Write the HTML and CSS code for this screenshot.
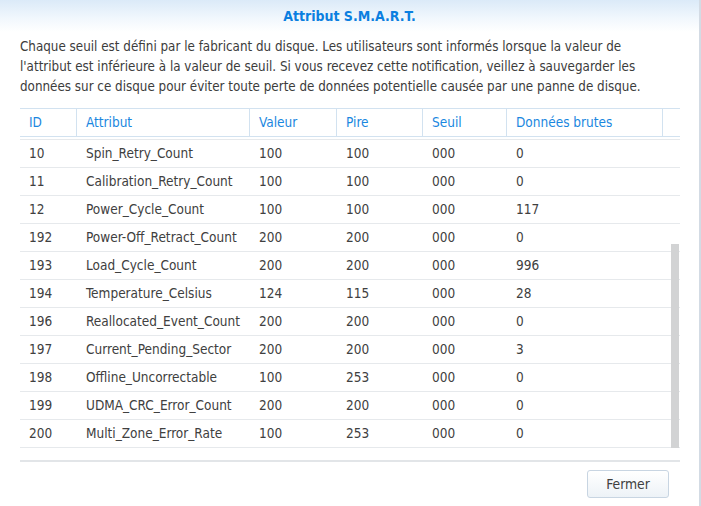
FILE: index.html
```html
<!DOCTYPE html>
<html lang="fr">
<head>
<meta charset="utf-8">
<title>Attribut S.M.A.R.T.</title>
<link rel="stylesheet" href="styles.css">
</head>
<body>
<div class="dialog">
  <div class="title">Attribut S.M.A.R.T.</div>
  <p class="desc">Chaque seuil est défini par le fabricant du disque. Les utilisateurs sont informés lorsque la valeur de l'attribut est inférieure à la valeur de seuil. Si vous recevez cette notification, veillez à sauvegarder les données sur ce disque pour éviter toute perte de données potentielle causée par une panne de disque.</p>
  <div class="grid">
    <div class="head row">
      <div class="cell">ID</div>
      <div class="cell">Attribut</div>
      <div class="cell">Valeur</div>
      <div class="cell">Pire</div>
      <div class="cell">Seuil</div>
      <div class="cell">Données brutes</div>
      <div class="cell"></div>
    </div>
    <div class="body">
      <div class="row"><div class="cell">10</div><div class="cell">Spin_Retry_Count</div><div class="cell">100</div><div class="cell">100</div><div class="cell">000</div><div class="cell">0</div></div>
      <div class="row"><div class="cell">11</div><div class="cell">Calibration_Retry_Count</div><div class="cell">100</div><div class="cell">100</div><div class="cell">000</div><div class="cell">0</div></div>
      <div class="row"><div class="cell">12</div><div class="cell">Power_Cycle_Count</div><div class="cell">100</div><div class="cell">100</div><div class="cell">000</div><div class="cell">117</div></div>
      <div class="row"><div class="cell">192</div><div class="cell">Power-Off_Retract_Count</div><div class="cell">200</div><div class="cell">200</div><div class="cell">000</div><div class="cell">0</div></div>
      <div class="row"><div class="cell">193</div><div class="cell">Load_Cycle_Count</div><div class="cell">200</div><div class="cell">200</div><div class="cell">000</div><div class="cell">996</div></div>
      <div class="row"><div class="cell">194</div><div class="cell">Temperature_Celsius</div><div class="cell">124</div><div class="cell">115</div><div class="cell">000</div><div class="cell">28</div></div>
      <div class="row"><div class="cell">196</div><div class="cell">Reallocated_Event_Count</div><div class="cell">200</div><div class="cell">200</div><div class="cell">000</div><div class="cell">0</div></div>
      <div class="row"><div class="cell">197</div><div class="cell">Current_Pending_Sector</div><div class="cell">200</div><div class="cell">200</div><div class="cell">000</div><div class="cell">3</div></div>
      <div class="row"><div class="cell">198</div><div class="cell">Offline_Uncorrectable</div><div class="cell">100</div><div class="cell">253</div><div class="cell">000</div><div class="cell">0</div></div>
      <div class="row"><div class="cell">199</div><div class="cell">UDMA_CRC_Error_Count</div><div class="cell">200</div><div class="cell">200</div><div class="cell">000</div><div class="cell">0</div></div>
      <div class="row"><div class="cell">200</div><div class="cell">Multi_Zone_Error_Rate</div><div class="cell">100</div><div class="cell">253</div><div class="cell">000</div><div class="cell">0</div></div>
      <div class="thumb"></div>
    </div>
  </div>
  <div class="footer">
    <button class="btn" type="button">Fermer</button>
  </div>
</div>
</body>
</html>
```

FILE: styles.css
```css
html, body {
  margin: 0;
  padding: 0;
  background: #ffffff;
}
.dialog {
  width: 699px;
  height: 506px;
  border-right: 2px solid #d3dbe4;
  font-family: "DejaVu Sans Condensed", "DejaVu Sans", sans-serif;
  font-size: 13.5px;
  color: #404040;
  background: #ffffff;
  position: relative;
}
.title {
  height: 32px;
  line-height: 32px;
  text-align: center;
  font-weight: bold;
  font-size: 14px;
  color: #0b7fe0;
  background: linear-gradient(to bottom, #dbeaf8 0%, #f2f8fd 60%, #ffffff 100%);
}
.desc {
  margin: 5px 0 0 20px;
  width: 650px;
  line-height: 20px;
  font-size: 13.3px;
  color: #3c3c3c;
}
.grid {
  margin: 11px 0 0 20px;
  width: 660px;
}
.row {
  display: grid;
  grid-template-columns: 57px 173px 87px 86px 84px 156px 17px;
  height: 28px;
  border-bottom: 1px solid #e6e9ec;
  box-sizing: border-box;
}
.cell {
  padding-left: 9px;
  line-height: 27px;
  white-space: nowrap;
  overflow: hidden;
}
.head {
  border-top: 1px solid #d2e2f0;
  border-bottom: 1px solid #d2e2f0;
  height: 29px;
  color: #1a87e0;
}
.head .cell {
  border-right: 1px solid #d2e2f0;
}
.head .cell:last-child {
  border-right: none;
}
.body {
  position: relative;
  height: 320px;
  border-top: 1px solid #e6e9ec;
  margin-top: 2px;
  border-bottom: 2px solid #e2e5e8;
}
.body .cell {
  line-height: 26px;
}
.thumb {
  position: absolute;
  right: 1px;
  top: 104px;
  width: 8px;
  height: 204px;
  background: #d2d3d4;
}
.footer {
  display: flex;
  justify-content: flex-end;
  padding: 8px 30px 0 0;
}
.btn {
  width: 82px;
  height: 28px;
  border: 1px solid #c8d5e2;
  border-radius: 3px;
  background: linear-gradient(to bottom, #ffffff 0%, #edf2f7 100%);
  font-family: "DejaVu Sans Condensed", "DejaVu Sans", sans-serif;
  font-size: 13.8px;
  color: #404040;
  padding: 0;
}
```
